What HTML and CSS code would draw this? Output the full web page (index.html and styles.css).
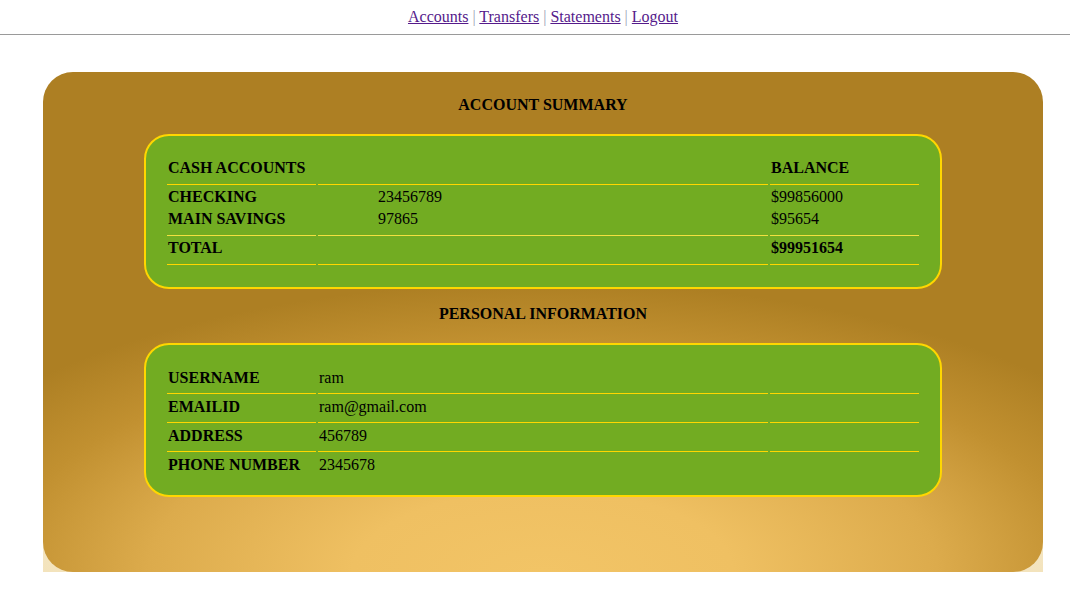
FILE: index.html
```html
<!DOCTYPE html>
<html>
<head>
<meta charset="utf-8">
<title>Account Summary</title>
<link rel="stylesheet" href="styles.css">
</head>
<body>
<nav class="topnav">
  <a href="#">Accounts</a> <span class="sep">|</span> <a href="#">Transfers</a> <span class="sep">|</span> <a href="#">Statements</a> <span class="sep">|</span> <a href="#">Logout</a>
</nav>
<hr class="rule">
<div class="frame">
  <div class="board">
    <h2 class="title">ACCOUNT SUMMARY</h2>
    <div class="panel">
      <table class="grid summary">
        <tr class="head">
          <th class="c1">CASH ACCOUNTS</th>
          <th class="c2"></th>
          <th class="c3">BALANCE</th>
        </tr>
        <tr class="first">
          <th class="c1">CHECKING</th>
          <td class="c2 num">23456789</td>
          <td class="c3">$99856000</td>
        </tr>
        <tr class="last">
          <th class="c1">MAIN SAVINGS</th>
          <td class="c2 num">97865</td>
          <td class="c3">$95654</td>
        </tr>
        <tr class="total">
          <th class="c1">TOTAL</th>
          <td class="c2"></td>
          <th class="c3">$99951654</th>
        </tr>
      </table>
    </div>
    <h2 class="title second">PERSONAL INFORMATION</h2>
    <div class="panel panel-info">
      <table class="grid info">
        <tr>
          <th class="c1">USERNAME</th>
          <td class="c2">ram</td>
          <td class="c3"></td>
        </tr>
        <tr>
          <th class="c1">EMAILID</th>
          <td class="c2">ram@gmail.com</td>
          <td class="c3"></td>
        </tr>
        <tr>
          <th class="c1">ADDRESS</th>
          <td class="c2">456789</td>
          <td class="c3"></td>
        </tr>
        <tr class="end">
          <th class="c1">PHONE NUMBER</th>
          <td class="c2">2345678</td>
          <td class="c3"></td>
        </tr>
      </table>
    </div>
  </div>
</div>
</body>
</html>
```
FILE: styles.css
```css
html, body {
  margin: 0;
  padding: 0;
  background: #ffffff;
}
body {
  font-family: "Liberation Serif", "Times New Roman", serif;
  font-size: 16px;
  color: #000;
}
.topnav {
  text-align: center;
  padding: 8px 0 0 16px;
  height: 18px;
  line-height: 18px;
}
.topnav a {
  color: #551a8b;
  text-decoration: underline;
}
.topnav .sep {
  color: #9aa3b5;
}
.rule {
  margin: 8px 0 0 0;
  border: 0;
  border-top: 1px solid #9a9a9a;
  height: 0;
}
.frame {
  margin: 37px 0 0 43px;
  width: 1000px;
  height: 500px;
  background: linear-gradient(to bottom, #ffffff 0%, #ffffff 40%, #f3e3bc 100%);
}
.board {
  box-sizing: border-box;
  height: 500px;
  border-radius: 30px;
  padding-top: 24px;
  background: radial-gradient(ellipse 680px 290px at 50% 100%, #f2c466 0%, #efc062 28%, #dcab4c 58%, #c19030 80%, #ad7f23 100%);
  background-color: #ad7f23;
  overflow: hidden;
}
.title {
  margin: 0;
  text-align: center;
  font-size: 16px;
  font-weight: bold;
  line-height: 18px;
  height: 18px;
}
.title.second {
  margin-top: 16px;
}
.panel {
  box-sizing: border-box;
  width: 798px;
  margin: 20px auto 0;
  background: #72ac22;
  border: 2px solid #ffd700;
  border-radius: 25px;
  padding: 20px 19px 20px 19px;
}
.panel.panel-info {
  padding-bottom: 18px;
}
.grid {
  width: 100%;
  border-collapse: separate;
  border-spacing: 2px;
  font-size: 16px;
}
.grid th, .grid td {
  text-align: left;
  vertical-align: top;
  line-height: 18px;
  padding: 1px 1px;
  font-weight: normal;
}
.grid th {
  font-weight: bold;
}
.grid .c1 { width: 147px; }
.grid .c3 { width: 147px; }
.summary .num { padding-left: 60px; }

.summary .head th {
  padding-bottom: 7px;
  border-bottom: 1px solid #ffd700;
}
.summary .first > * {
  padding-top: 1px;
  padding-bottom: 1px;
}
.summary .last > * {
  padding-bottom: 7px;
  border-bottom: 1px solid #f2e040;
}
.summary .total > * {
  padding-top: 1px;
  padding-bottom: 7px;
  border-bottom: 1px solid #ffd700;
}
.info tr > * {
  padding-top: 2px;
  padding-bottom: 6px;
  border-bottom: 1px solid #ffd700;
}
.info tr.end > * {
  border-bottom: 0;
  padding-bottom: 1px;
}
```
